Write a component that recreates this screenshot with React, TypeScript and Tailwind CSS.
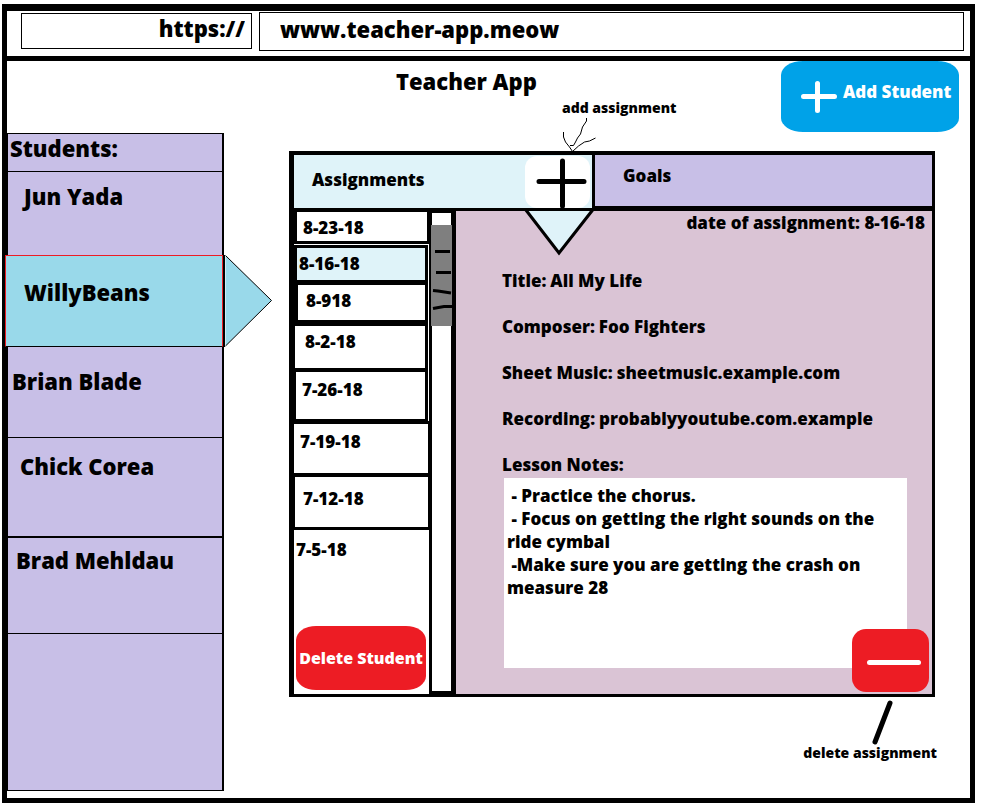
import React from "react";

type Student = { name: string; row: string };
type Assignment = { date: string; row: string };

const students: Student[] = [
  { name: "Jun Yada", row: "h-[83px] pt-2.5 pl-4" },
  { name: "WillyBeans", row: "h-[92px] pt-[22px] pl-[18px]" },
  { name: "Brian Blade", row: "h-[91px] pt-5 pl-1 border-b" },
  { name: "Chick Corea", row: "h-[100px] pt-3.5 pl-3 border-b-2" },
  { name: "Brad Mehldau", row: "h-[96px] pt-2 pl-2 border-b" },
];

const assignments: Assignment[] = [
  { date: "8-23-18", row: "h-[33px] pt-1 pl-1.5 border-l-[3px] border-r-2 border-t border-b-[3px]" },
  { date: "8-16-18", row: "h-[38px] mt-px mr-px pt-1 pl-0.5 border-l-[3px] border-r-[3px] border-t-[3px] border-b-[3px] bg-[#dff3f9]" },
  { date: "8-918", row: "h-[40px] mr-px pt-1 pl-2 border-l-4 border-r-[3px] border-t-2 border-b-[3px]" },
  { date: "8-2-18", row: "h-[47px] mr-px pt-1 pl-2.5 border-l border-r-[3px] border-t-[3px] border-b-2" },
  { date: "7-26-18", row: "h-[51px] mr-px pt-1.5 pl-1.5 border-l-2 border-r-[3px] border-t-2 border-b-2" },
  { date: "7-19-18", row: "h-[54px] pt-1.5 pl-1.5 border-r border-t-[3px] border-b-2" },
  { date: "7-12-18", row: "h-[55px] pt-2.5 pl-2 border-l border-r border-t-2 border-b-[3px]" },
];

const details: { label: string; value: string; link?: boolean }[] = [
  { label: "Title:", value: "All My Life" },
  { label: "Composer:", value: "Foo Fighters" },
  { label: "Sheet Music:", value: "sheetmusic.example.com", link: true },
  { label: "Recording:", value: "probablyyoutube.com.example", link: true },
];

const notes = ` - Practice the chorus.
 - Focus on getting the right sounds on the ride cymbal
 -Make sure you are getting the crash on measure 28`;

function AddressBar() {
  return (
    <div className="flex h-[50px] items-start border-b-[5px] border-black pl-3.5 pr-1.5 pt-px">
      <input
        aria-label="Protocol"
        defaultValue="https://"
        className="mt-px h-9 w-[231px] border border-black pr-1.5 pb-1.5 text-right text-[22px] outline-none"
      />
      <input
        aria-label="Address"
        defaultValue="www.teacher-app.meow"
        className="ml-[7px] h-[39px] min-w-0 flex-1 border border-black pb-1.5 pl-5 text-[22px] outline-none"
      />
    </div>
  );
}

function Sidebar() {
  return (
    <nav className="flex w-[217px] shrink-0 flex-col border-y border-l border-r-2 border-black bg-[#c8bfe7] text-[22px] leading-7">
      <h2 className="h-[38px] border-b border-black pl-0.5">Students:</h2>
      {students.map((s) =>
        s.name === "WillyBeans" ? (
          <button
            key={s.name}
            aria-current="true"
            className={`relative -ml-[3px] -mr-px flex items-start border-x border-t border-b border-[#ed1c24] border-b-black bg-[#99d9ea] text-left ${s.row}`}
          >
            {s.name}
            <svg className="absolute -right-[51px] -top-px" width="50" height="92" viewBox="0 0 50 92">
              <path d="M1 0V92" stroke="#000" strokeWidth="2" />
              <path d="M2.500 .5L48.500 45.500L2.500 91" fill="#99d9ea" stroke="#000" />
            </svg>
          </button>
        ) : (
          <button key={s.name} className={`flex items-start border-black text-left ${s.row}`}>
            {s.name}
          </button>
        ),
      )}
      <div className="h-[156px]" />
    </nav>
  );
}

function AssignmentTab() {
  return (
    <div className="relative flex w-[301px] shrink-0 justify-between border-r-[3px] border-b-[3px] border-black bg-[#dff3f9]">
      <button className="pb-1 pl-[18px]">Assignments</button>
      <button aria-label="Add assignment" className="mr-0.5 mt-px h-[52px] w-[65px] rounded-xl bg-white">
        <svg width="65" height="52" viewBox="0 0 65 52">
          <path d="M37.500 5V50M14 25.500H59" stroke="#000" strokeWidth="5" strokeLinecap="round" />
        </svg>
      </button>
      <svg className="absolute -right-[3px] top-[52px] z-10" width="72" height="50" viewBox="0 0 72 50">
        <path d="M2.500 2.500L36 46L70 2.500Z" fill="#dff3f9" stroke="#000" strokeWidth="3" />
      </svg>
      <div className="absolute -top-14 left-[268px] text-[14px] leading-[18px] whitespace-nowrap">
        add assignment
        <svg className="block" width="36" height="38" viewBox="0 0 36 38">
          <path
            d="M24.500 1V4L20.500 10L18.500 17L15.500 21L13.500 25L11.500 28.500H8M1.500 15V20L3.500 25L7.500 30L10.500 34.500L16.500 29L22.500 25L27.500 24L33.500 21"
            fill="none"
            stroke="#000"
          />
        </svg>
      </div>
    </div>
  );
}

function AssignmentList() {
  return (
    <div className="flex w-[135px] shrink-0 flex-col">
      {assignments.map((a) => (
        <button key={a.date} className={`flex items-start border-black text-left leading-6 ${a.row}`}>
          {a.date}
        </button>
      ))}
      <button className="pt-2 pl-0.5 text-left leading-6">7-5-18</button>
      <button className="mr-[3px] mt-auto mb-1 ml-0.5 h-16 rounded-[20px/14px] bg-[#ed1c24] text-[16px] whitespace-nowrap text-white">
        Delete Student
      </button>
    </div>
  );
}

function Scrollbar() {
  return (
    <div className="w-[27px] shrink-0 border-t-2 border-r-[5px] border-b-[3px] border-l-[3px] border-black pt-3">
      <svg className="-ml-px block" width="21" height="101" viewBox="0 0 21 101">
        <path d="M0 0H21V101H0Z" fill="#7f7f7f" />
        <path d="M4 26.500H19M5 47.500H20M2 65.500L7 66L20 68M2 83.500L13 81.500H21" fill="none" stroke="#000" strokeWidth="3" />
      </svg>
    </div>
  );
}

function AssignmentDetail() {
  return (
    <section className="relative min-w-0 flex-1 bg-[#dac4d5] pr-[25px]">
      <p className="-mr-[18px] text-right leading-[23px]">date of assignment: 8-16-18</p>
      <dl className="mt-[35px] pl-[46px] leading-[23px]">
        {details.map((d) => (
          <div key={d.label} className="mb-[23px] flex gap-1">
            <dt>{d.label}</dt>
            <dd>{d.link ? <a href="#">{d.value}</a> : d.value}</dd>
          </div>
        ))}
      </dl>
      <label htmlFor="notes" className="block pl-[46px] leading-[23px]">
        Lesson Notes:
      </label>
      <div className="pl-12 pt-0.5">
        <textarea
          id="notes"
          defaultValue={notes}
          className="block h-[190px] w-full resize-none overflow-hidden bg-white px-[3px] pt-1.5 leading-[23px] outline-none"
        />
      </div>
      <button
        aria-label="Delete assignment"
        className="absolute right-[3px] bottom-0.5 h-[63px] w-[77px] rounded-[14px] bg-[#ed1c24]"
      >
        <svg width="77" height="63" viewBox="0 0 77 63">
          <path d="M17.500 33.500H66.500" stroke="#fff" strokeWidth="5" strokeLinecap="round" />
        </svg>
      </button>
    </section>
  );
}

export default function App() {
  return (
    <div className="bg-white pt-1 pr-[17px] pb-[9px] pl-0.5 font-['Open_Sans',sans-serif] text-[17px] font-extrabold text-black">
      <div className="border-x-[5px] border-t-[7px] border-b-[5px] border-black">
        <AddressBar />
        <header className="flex h-[72px] items-start justify-between pr-[11px] pl-[389px]">
          <h1 className="pt-1.5 text-[22px] leading-7">Teacher App</h1>
          <button className="flex h-[71px] w-[178px] rounded-[22px/14px] bg-[#00a2e8] pt-5 pl-5 text-left whitespace-nowrap text-white">
            <svg className="shrink-0" width="36" height="32" viewBox="0 0 36 32">
              <path d="M16.500 2.500V29.500M2.500 15.500H33.500" stroke="#fff" strokeWidth="5" strokeLinecap="round" />
            </svg>
            <span className="pl-1.5 leading-[22px]">Add Student</span>
          </button>
        </header>
        <main className="flex pb-[7px]">
          <Sidebar />
          <div className="mt-[18px] mr-[35px] ml-[65px] min-w-0 flex-1">
            <div className="border-t-4 border-r-[3px] border-b-[3px] border-l-[5px] border-black">
              <div className="flex h-14">
                <AssignmentTab />
                <button className="flex-1 border-b-[5px] border-black bg-[#c8bfe7] pb-2.5 pl-7 text-left">Goals</button>
              </div>
              <div className="flex h-[483px]">
                <AssignmentList />
                <Scrollbar />
                <AssignmentDetail />
              </div>
            </div>
            <div className="flex flex-col items-end text-[14px] leading-4">
              <svg className="mt-0.5 mr-10" width="24" height="46" viewBox="0 0 24 46">
                <path d="M19 4L4 43" stroke="#000" strokeWidth="5" strokeLinecap="round" />
              </svg>
              <p className="-mr-0.5">delete assignment</p>
            </div>
          </div>
        </main>
      </div>
    </div>
  );
}
